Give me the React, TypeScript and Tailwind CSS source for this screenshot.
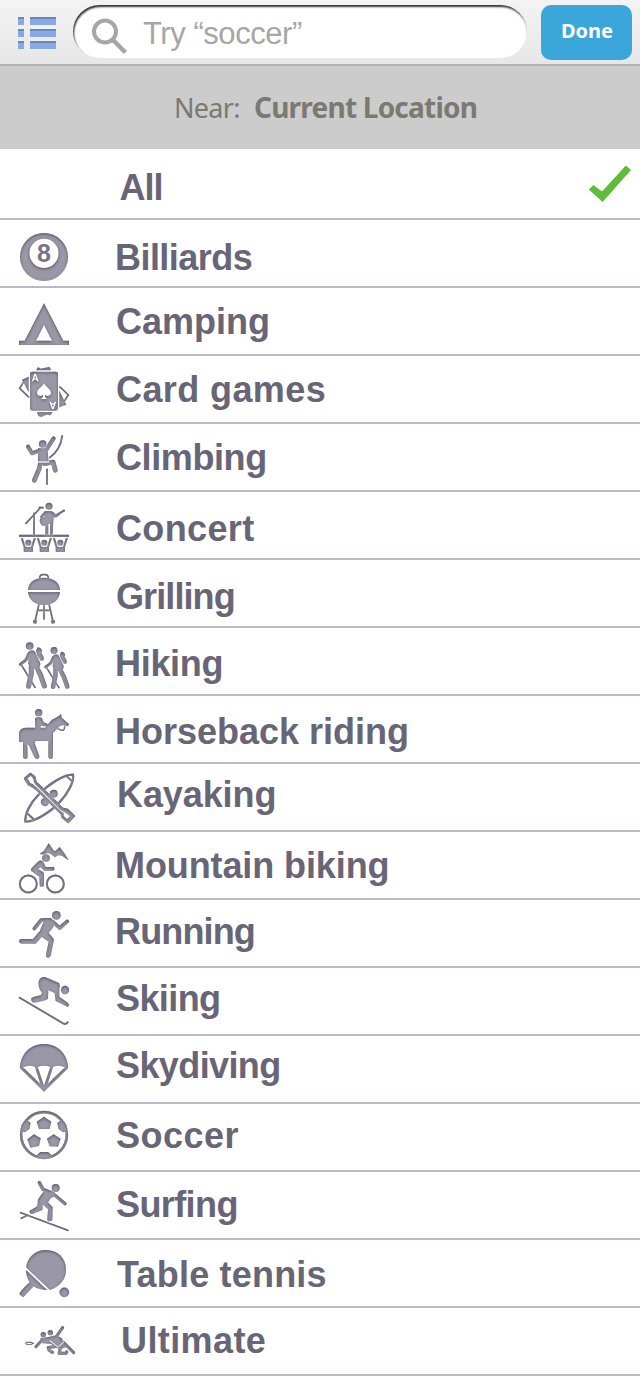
import type { ReactNode } from "react";

type GlyphProps = { id: string; y?: number; cut?: ReactNode; children: ReactNode };

/* Activity glyph: solid shapes with an inner shadow; `cut` holds the knocked-out areas. */
function Glyph({ id, y = 0, cut, children }: GlyphProps) {
  return (
    <svg className="block h-[66px] w-[84px] shrink-0" viewBox={`0 ${y} 252 198`} aria-hidden="true">
      <defs>
        <filter id={`${id}-f`} x="0" y={y} width="252" height="198" filterUnits="userSpaceOnUse" colorInterpolationFilters="sRGB">
          <feComponentTransfer in="SourceAlpha" result="inv">
            <feFuncA type="linear" slope="-1" intercept="1" />
          </feComponentTransfer>
          <feGaussianBlur in="inv" stdDeviation="4.5" result="blur" />
          <feOffset in="blur" dx="0" dy="2" result="off" />
          <feFlood floodColor="#494755" floodOpacity="0.88" />
          <feComposite in2="off" operator="in" />
          <feComposite in2="SourceAlpha" operator="in" result="shade" />
          <feMerge>
            <feMergeNode in="SourceGraphic" />
            <feMergeNode in="shade" />
          </feMerge>
        </filter>
        <mask id={`${id}-m`} x="0" y={y} width="252" height="198" maskUnits="userSpaceOnUse">
          <rect x="0" y={y} width="252" height="198" fill="#fff" />
          <g fill="#000" stroke="none">{cut}</g>
        </mask>
      </defs>
      <g filter={`url(#${id}-f)`}>
        <g mask={`url(#${id}-m)`} fill="#9a98a7" stroke="#9a98a7" strokeWidth="0" strokeLinecap="round" strokeLinejoin="round">
          {children}
        </g>
      </g>
    </svg>
  );
}

const Billiards = () => (
  <Glyph id="billiards" cut={<circle cx="132" cy="100" r="44" />}>
    <circle cx="132" cy="111" r="72" />
  </Glyph>
);

const Camping = () => (
  <Glyph id="camping" y={204} cut={<path d="M132 315L156 362H108Z" />}>
    <path d="M132 250L190 362H207V375H57V362H74Z" />
  </Glyph>
);

const Cards = () => (
  <Glyph
    id="cards"
    cut={
      <>
        <path d="M132 82C127 93 111 99 111 111C111 120 122 123 129 117C129 123 127 126 122 129H142C137 126 135 123 135 117C142 123 153 120 153 111C153 99 137 93 132 82Z" />
        <path d="M95 76L103 53H108L116 76H111L109 71H102L100 76ZM103 67H108L105.500 59Z" fillRule="evenodd" />
        <path d="M148 137L156 160H161L169 137H164L162 142H155L153 137ZM156 146H161L158.500 154Z" fillRule="evenodd" />
      </>
    }
  >
    <rect x="90" y="47" width="84" height="117" rx="7" />
    <path d="M108 43L114 34L123 38L132 36L149 33L153 43Z" />
    <path d="M111 168H158L151 178L139 176L124 183L115 180Z" />
    <path d="M66 71L86 62V109Z" />
    <path d="M178 104L199 146L178 154Z" />
    <path d="M70 79L59 97L86 123M180 93L205 117L194 134" fill="none" strokeWidth="5" />
  </Glyph>
);

const Climbing = () => (
  <Glyph id="climbing" y={204} cut={<path d="M113 316H148V320H113Z" />}>
    <circle cx="128" cy="264" r="11.500" />
    <path d="M114 277H142L145 307L145 316L135 330L114 319V296Z" />
    <path d="M84 272L96 292L119 284M138 283L161 247" fill="none" strokeWidth="12" />
    <path d="M122 320L117 340L103 373M135 323L159 318L166 343" fill="none" strokeWidth="14" />
    <path d="M187 238C183 270 168 292 148 306M141 338V386" fill="none" strokeWidth="5" strokeLinecap="butt" />
  </Glyph>
);

const Concert = () => (
  <Glyph id="concert">
    <circle cx="147" cy="43" r="10.500" />
    <path d="M57 128H207V135H57Z" />
    <path d="M137 57H154L161 66L158 128H150V96H145V128H136V96L132 70Z" />
    <path d="M129 76C117 77 117 91 124 98C128 104 143 102 146 93C159 90 154 76 145 79C142 71 134 73 135 79Z" />
    <path d="M138 88L192 56" fill="none" strokeWidth="6" />
    <path d="M136 61L124 75L143 84M156 62L168 73L176 67" fill="none" strokeWidth="7" />
    <path d="M78 94L121 48M118 47H129M102 64V128" fill="none" strokeWidth="5" />
    {[85, 133, 181].map((x) => (
      <g key={x}>
        <circle cx={x} cy="152" r="9" />
        <path d={`M${x - 13} 163Q${x} 167 ${x + 13} 163V180H${x - 13}Z`} />
        <path d={`M${x - 19} 140L${x - 11} 165V177M${x + 19} 140L${x + 11} 165V177`} fill="none" strokeWidth="6" />
      </g>
    ))}
  </Glyph>
);

const Grilling = () => (
  <Glyph id="grill" y={204} cut={<path d="M80 294H184V300H80Z" />}>
    <path d="M84 296C84 272 104 257 132 257C160 257 180 272 180 296C180 322 160 339 132 339C104 339 84 322 84 296Z" />
    <path d="M119 258C119 244 145 244 145 258" fill="none" strokeWidth="5" />
    <path d="M117 336L105 389M132 338V381M147 336L159 389M112 355H152" fill="none" strokeWidth="5" />
    <circle cx="105" cy="389" r="6" />
    <circle cx="159" cy="389" r="6" />
  </Glyph>
);

const Walker = () => (
  <>
    <circle cx="89" cy="54" r="11.500" />
    <path d="M87 70Q96 63 105 71L121 105Q122 119 111 121L99 122L84 107Q88 96 80 83Z" />
    <path d="M108 68L113 58L121 60L126 67L124 75L131 87V97L122 98L112 83Z" />
    <path d="M87 77L78 96L61 109" fill="none" strokeWidth="9" />
    <path d="M94 113L94 136L86 175M107 113L122 142L133 174" fill="none" strokeWidth="15" />
    <path d="M63 109L105 178" fill="none" strokeWidth="5" />
  </>
);

const Hiking = () => (
  <Glyph id="hiking">
    <Walker />
    <g transform="translate(82 19) scale(0.9)">
      <Walker />
    </g>
  </Glyph>
);

const Horse = () => (
  <Glyph id="horse" y={204}>
    <circle cx="116" cy="254" r="11" />
    <path d="M105 273Q106 267 116 267Q127 267 128 276L131 283L145 289L143 296L122 293V304H106Z" />
    <path d="M57 342V318Q58 300 77 299H135L155 276L178 263L183 257L185 269L207 288L204 295L187 292L180 294L159 315V384Q159 393 152 393Q145 393 145 384V339H107L104 346L118 384Q119 392 111 393Q106 393 103 387L88 355L82 349L83 385Q83 393 76 393Q69 393 69 385V342Z" />
    <path d="M174 302Q194 315 194 295" fill="none" strokeWidth="4" />
  </Glyph>
);

const Kayak = () => (
  <Glyph
    id="kayak"
    cut={<path d="M83 43L93 36L100 45L102 54L107 63L117 72L182 138L198 147L210 157L201 166L191 156V147L182 141L115 75L98 60L91 58Z" />}
  >
    <path d="M76 173C75 151 89 119 115 93C145 60 192 32 219 32C223 53 203 90 178 116C149 147 101 174 76 173Z" fill="none" strokeWidth="7" />
    <path d="M81 148L101 166M198 35L216 51" fill="none" strokeWidth="6" />
    <circle cx="161" cy="89" r="12" />
    <circle cx="135" cy="114" r="12.500" />
    <path
      d="M75 44L91 30L103 39L107 55L117 64L187 134L203 138L222 156L205 174L188 160L184 148L109 75L94 65L86 61Z"
      strokeWidth="7"
    />
  </Glyph>
);

const Biking = () => (
  <Glyph id="biking" y={204}>
    <circle cx="85" cy="360" r="25.500" fill="none" strokeWidth="6" />
    <circle cx="166" cy="360" r="25.500" fill="none" strokeWidth="6" />
    <circle cx="138" cy="282" r="11.500" />
    <path d="M119 270L132 260L146 238L160 258L165 262L179 249L194 269L206 289L185 275L174 274L165 280L152 270L143 267L132 272Z" />
    <path d="M114 293Q122 286 130 293L137 309H162Q166 315 161 320H132L122 310L115 316L130 324Q133 328 132 365Q125 372 119 365L118 338L97 323Q90 319 95 312Z" />
  </Glyph>
);

const Running = () => (
  <Glyph id="running">
    <circle cx="169" cy="46" r="13" />
    <path d="M128 54H153L165 68L158 84L146 98L162 118L152 167Q150 174 143 173Q137 171 138 164L146 125L125 111L107 131H64Q57 130 57 124Q58 117 64 117H99L120 92L130 66Z" />
    <path d="M139 60H124L103 86M157 64L179 84L202 64" fill="none" strokeWidth="11" />
  </Glyph>
);

const Skiing = () => (
  <Glyph id="skiing" y={204}>
    <circle cx="195" cy="270" r="12.500" />
    <path d="M116 245Q119 230 135 231L177 249Q182 257 178 266V290L203 308Q211 315 203 321L167 303L164 279L145 271L144 296Q139 302 102 308Q92 307 94 295Q98 290 122 286L126 279Q113 261 116 245Z" />
    <path d="M59 293L191 371Q197 374 203 367" fill="none" strokeWidth="5.500" />
  </Glyph>
);

const Skydiving = () => (
  <Glyph
    id="skydive"
    cut={
      <>
        <path d="M69 94Q86 85 105 93L121 144Z" />
        <path d="M113 93Q132 85 151 93L132 149Z" />
        <path d="M159 93Q178 85 195 94L143 144Z" />
      </>
    }
  >
    <path d="M60 97C60 55 91 24 132 24C173 24 204 55 204 97L132 167Z" />
  </Glyph>
);

const Soccer = () => (
  <Glyph id="soccer" y={204}>
    <circle cx="132" cy="297" r="68.500" fill="none" strokeWidth="8" />
    <path d="M132 242L154 257L148 279H117L110 257Z" />
    <path d="M102 295L122 307L117 330L91 335L82 310Z" />
    <path d="M161 295L182 308L174 332L149 331L141 308Z" />
    <path d="M78 250L92 261L88 279L75 289L63 287L65 268Z" />
    <path d="M186 250L172 261L176 279L189 289L201 287L199 268Z" />
    <path d="M111 357L121 348H144L154 357L145 366H119Z" />
  </Glyph>
);

const Surfing = () => (
  <Glyph id="surfing">
    <circle cx="167" cy="48" r="12" />
    <path d="M132 57Q151 51 163 61L168 71L152 79L144 91L158 106L157 143Q152 150 144 147Q141 145 142 140L144 112L129 98L127 114L98 126Q88 127 89 116L112 103L114 82Z" />
    <path d="M118 32L129 52L149 60M161 67L195 95" fill="none" strokeWidth="10" />
    <path d="M62 122L203 175M64 139L80 131" fill="none" strokeWidth="5" />
  </Glyph>
);

const TableTennis = () => (
  <Glyph id="tennis" y={204} cut={<path d="M77 285L149 353L145 357L75 291Z" />}>
    <path d="M78 292C80 256 105 234 138 234C174 234 198 259 198 293C198 321 180 344 149 354Q121 356 101 343L71 374Q67 377 58 366Q57 361 89 331Q78 315 78 292Z" />
    <circle cx="193" cy="361" r="14.500" />
  </Glyph>
);

const Ultimate = () => (
  <Glyph id="ultimate" y={24} cut={<path d="M150 120L174 140L192 123L194 125L174 143L148 122Z" />}>
    <circle cx="130" cy="104" r="8" />
    <circle cx="151" cy="98" r="8" />
    <ellipse cx="88" cy="130" rx="12" ry="3.500" fill="none" strokeWidth="3" />
    <path d="M121 114L145 111L160 107L174 108L186 115L188 124L203 140L185 146L168 144L154 132L127 130Z" />
    <path d="M126 121L108 140M167 113L188 83M190 127L221 158" fill="none" strokeWidth="9" />
    <path d="M167 139L145 143L148 151L157 157M181 143L178 160H198L200 156" fill="none" strokeWidth="10" />
  </Glyph>
);

type Row = { label: string; icon: () => ReactNode; text: string };

const rows: Row[] = [
  { label: "Billiards", icon: Billiards, text: "pt-[20px] pl-[31px] tracking-[-0.55px]" },
  { label: "Camping", icon: Camping, text: "pt-[16px] pl-[32px]" },
  { label: "Card games", icon: Cards, text: "pt-[16px] pl-[32px] tracking-[0.4px]" },
  { label: "Climbing", icon: Climbing, text: "pt-[16px] pl-[32px] tracking-[-0.4px]" },
  { label: "Concert", icon: Concert, text: "pt-[19px] pl-[32px] tracking-[0.35px]" },
  { label: "Grilling", icon: Grilling, text: "pt-[19px] pl-[32px] tracking-[-0.9px]" },
  { label: "Hiking", icon: Hiking, text: "pt-[18px] pl-[31px] tracking-[-0.3px]" },
  { label: "Horseback riding", icon: Horse, text: "pt-[18px] pl-[31px]" },
  { label: "Kayaking", icon: Kayak, text: "pt-[13px] pl-[33px] tracking-[-0.1px]" },
  { label: "Mountain biking", icon: Biking, text: "pt-[16px] pl-[31px] tracking-[-0.1px]" },
  { label: "Running", icon: Running, text: "pt-[14px] pl-[31px] tracking-[-0.85px]" },
  { label: "Skiing", icon: Skiing, text: "pt-[13px] pl-[32px] tracking-[-0.6px]" },
  { label: "Skydiving", icon: Skydiving, text: "pt-[12px] pl-[32px] tracking-[-0.6px]" },
  { label: "Soccer", icon: Soccer, text: "pt-[14px] pl-[32px] tracking-[0.5px]" },
  { label: "Surfing", icon: Surfing, text: "pt-[15px] pl-[32px] tracking-[-0.6px]" },
  { label: "Table tennis", icon: TableTennis, text: "pt-[17px] pl-[33px] tracking-[0.2px]" },
  { label: "Ultimate", icon: Ultimate, text: "pt-[15px] pl-[37px] tracking-[0.4px]" },
];

function Toolbar() {
  return (
    <header className="flex h-[66px] items-start border-b-2 border-[#b3b3b3] bg-linear-to-b from-[#f3f3f3] to-[#e7e7e7] pt-[5px] pl-[18px]">
      <div className="mt-3 flex w-[38px] flex-col gap-1">
        {[0, 1, 2].map((n) => (
          <div key={n} className="flex h-2 gap-1.5">
            <span className="w-1.5 border-t-2 border-[#6389c5] bg-[#8aa8e2]" />
            <span className="flex-1 border-t-2 border-[#6389c5] bg-[#8aa8e2]" />
          </div>
        ))}
      </div>
      <div className="ml-[17px] flex h-[53px] w-[454px] rounded-full bg-white pl-[18px] shadow-[inset_1px_2px_2px_#333]">
        <svg className="mt-3 h-[38px] w-[38px]" viewBox="0 0 38 38" fill="none" stroke="#a6a6a6" aria-hidden="true">
          <circle cx="14" cy="14.500" r="11" strokeWidth="4" />
          <path d="M22 23L34.500 35.500" strokeWidth="4.500" />
        </svg>
        <span className="ml-[14px] pt-3 font-['Liberation_Sans',sans-serif] text-[31px] leading-[34px] tracking-[-0.45px] whitespace-nowrap text-[#a6a6a6]">
          Try “soccer”
        </span>
      </div>
      <button className="ml-[14px] h-[55px] w-[91px] rounded-[10px] bg-[#3ba6da] pb-[3px] pl-px text-center font-['Noto_Sans','Open_Sans',sans-serif] text-[20px] leading-[52px] font-bold text-white">
        Done
      </button>
    </header>
  );
}

export default function App() {
  return (
    <main className="h-[1400px] w-[640px] overflow-hidden bg-white font-['Liberation_Sans',Arial,sans-serif]">
      <Toolbar />
      <div className="flex h-[83px] bg-[#ccc] pt-[23px] pl-[174px] font-['Noto_Sans','Open_Sans',sans-serif] text-[28px] leading-[36px] whitespace-nowrap text-[#7a7972]">
        <span className="w-[80px] pt-px text-[27px] tracking-[-0.7px]">Near:</span>
        <span className="font-bold tracking-[-0.78px]">Current Location</span>
      </div>
      <ul className="text-[36px] leading-[36px] font-bold whitespace-nowrap text-[#676576]">
        <li className="flex h-[71px] justify-between border-b-2 border-[#bab8c9] pl-[119.500px]">
          <span className="pt-[21px] tracking-[-1px]">All</span>
          <svg className="mt-4 mr-[8px] h-[38px] w-[44px]" viewBox="0 0 44 38" aria-hidden="true">
            <path d="M1.500 24.500L5.500 20.500L14 27L38 1L42.500 5L14.500 36.500Z" fill="#61bb3b" stroke="#61bb3b" strokeWidth="1" strokeLinejoin="round" />
          </svg>
        </li>
        {rows.map(({ label, icon: Icon, text }) => (
          <li key={label} className="relative flex h-[68px] border-b-2 border-[#bab8c9]">
            <Icon />
            {label === "Billiards" && (
              <span className="absolute top-[20px] left-[37px] w-[14px] text-center text-[25px] leading-[26px] text-[#777584]">8</span>
            )}
            <span className={text}>{label}</span>
          </li>
        ))}
      </ul>
    </main>
  );
}
